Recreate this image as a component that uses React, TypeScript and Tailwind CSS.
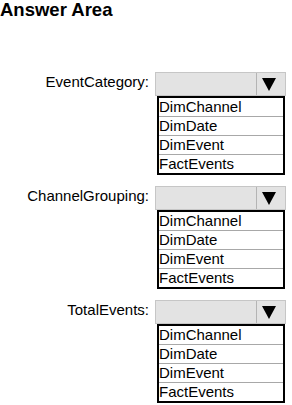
import React from "react";

const items = ["DimChannel", "DimDate", "DimEvent", "FactEvents"];

function Section({ label }: { label: string }) {
  return (
    <div className="flex">
      <div className="w-[149px] shrink-0 pt-[1px] text-right text-[15px] leading-[17px] text-black">
        {label}
      </div>
      <div className="ml-[6px] flex flex-col">
        <div className="flex h-[24px] w-[131px] border border-[#c6c6c6] bg-[#e3e3e3]">
          <div className="flex-1" />
          <div className="flex w-[29px] items-center border-l border-[#b4b4b4] pl-[5px]">
            <svg width="14" height="13" viewBox="0 0 14 13">
              <polygon points="0,0 14,0 7,13" fill="#000" />
            </svg>
          </div>
        </div>
        <div className="ml-[2px] w-[128px] border-2 border-black bg-white">
          {items.map((it, i) => (
            <div
              key={it}
              className={
                "text-[15px] leading-[18px] text-black " +
                (i < items.length - 1 ? "h-[19px] border-b border-[#a8a8a8]" : "h-[18px]")
              }
            >
              {it}
            </div>
          ))}
        </div>
      </div>
    </div>
  );
}

export default function App() {
  return (
    <div
      className="h-[405px] w-[292px] overflow-hidden bg-white"
      style={{ fontFamily: '"Liberation Sans", Arial, sans-serif' }}
    >
      <div className="h-[20px] text-[18.5px] font-bold leading-[19px] text-black">Answer Area</div>
      <div className="mt-[52px] flex flex-col gap-[11px]">
        <Section label="EventCategory:" />
        <Section label="ChannelGrouping:" />
        <Section label="TotalEvents:" />
      </div>
    </div>
  );
}
